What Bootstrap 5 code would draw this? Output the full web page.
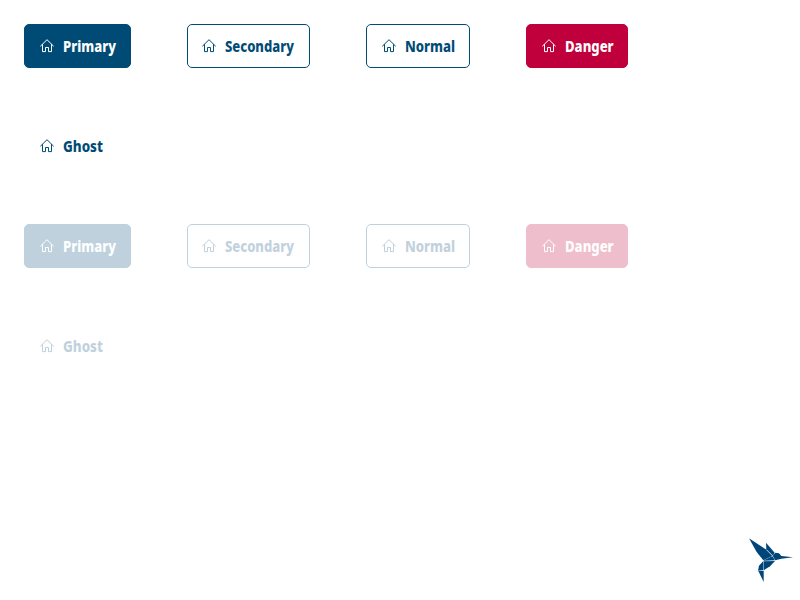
<!DOCTYPE html>
<html lang="en">
<head>
<meta charset="utf-8">
<meta name="viewport" content="width=device-width, initial-scale=1">
<title>Buttons</title>
<link href="https://cdn.jsdelivr.net/npm/bootstrap@5.3.0/dist/css/bootstrap.min.css" rel="stylesheet">
<style>
body { font-family: "Noto Sans", "Open Sans", sans-serif; }
.demo-page { padding: 24px; }
.demo-row { gap: 56px; height: 100px; }
.action-btn {
  --bs-btn-font-weight: 800;
  --bs-btn-border-radius: 5px;
  --bs-btn-disabled-opacity: .25;
  --bs-btn-padding-x: 15px;
  --bs-btn-padding-y: 0;
  --bs-btn-line-height: 24px;
  height: 44px;
  gap: 9px;
}
.action-btn svg { width: 14px; height: 14px; flex: none; }
.caption { display: block; white-space: nowrap; font-size: 15px; transform-origin: 0 50%; transform: scaleX(.875); }
.tone-blue {
  --bs-btn-color: #fff; --bs-btn-bg: #004b76; --bs-btn-border-color: #004b76;
  --bs-btn-hover-color: #fff; --bs-btn-hover-bg: #003a5c;
  --bs-btn-disabled-color: #fff; --bs-btn-disabled-bg: #004b76; --bs-btn-disabled-border-color: #004b76;
}
.tone-line {
  --bs-btn-color: #004b76; --bs-btn-bg: #fff; --bs-btn-border-color: #004b76;
  --bs-btn-hover-color: #fff; --bs-btn-hover-bg: #004b76;
  --bs-btn-disabled-color: #004b76; --bs-btn-disabled-bg: #fff; --bs-btn-disabled-border-color: #004b76;
}
.tone-red {
  --bs-btn-color: #fff; --bs-btn-bg: #c0003c; --bs-btn-border-color: #c0003c;
  --bs-btn-hover-color: #fff; --bs-btn-hover-bg: #98002f;
  --bs-btn-disabled-color: #fff; --bs-btn-disabled-bg: #c0003c; --bs-btn-disabled-border-color: #c0003c;
}
.tone-ghost { --bs-btn-color: #004b76; --bs-btn-hover-color: #003a5c; --bs-btn-disabled-color: #004b76; --bs-btn-disabled-border-color: transparent; }
.size-primary { width: 107px; }
.size-secondary { width: 123px; --bs-btn-padding-x: 14.4px; }
.size-secondary .caption { transform: scaleX(.87); }
.size-normal { width: 104px; }
.size-danger { width: 102px; }
.size-ghost { width: 95px; }
.size-ghost .caption { transform: scaleX(.895); }
.bird { width: 60px; height: 60px; margin-bottom: 10px; }
</style>
</head>
<body class="bg-white">
<svg class="d-none" aria-hidden="true">
  <symbol id="home" viewBox="0 0 14 14">
    <path d="M.6 7 7 .7 13.4 7M2.5 5.6v7h3V8.5h3v4.1h3v-7" fill="none" stroke="currentColor" stroke-width="1" stroke-linejoin="round" stroke-linecap="round"/>
  </symbol>
</svg>
<main class="demo-page">
  <div class="demo-row d-flex align-items-start">
    <button type="button" class="btn action-btn tone-blue size-primary d-inline-flex align-items-center"><svg><use href="#home"/></svg><span class="caption">Primary</span></button>
    <button type="button" class="btn action-btn tone-line size-secondary d-inline-flex align-items-center"><svg><use href="#home"/></svg><span class="caption">Secondary</span></button>
    <button type="button" class="btn action-btn tone-line size-normal d-inline-flex align-items-center"><svg><use href="#home"/></svg><span class="caption">Normal</span></button>
    <button type="button" class="btn action-btn tone-red size-danger d-inline-flex align-items-center"><svg><use href="#home"/></svg><span class="caption">Danger</span></button>
  </div>
  <div class="demo-row d-flex align-items-start">
    <button type="button" class="btn action-btn tone-ghost size-ghost d-inline-flex align-items-center"><svg><use href="#home"/></svg><span class="caption">Ghost</span></button>
  </div>
  <div class="demo-row d-flex align-items-start">
    <button type="button" disabled class="btn action-btn tone-blue size-primary d-inline-flex align-items-center"><svg><use href="#home"/></svg><span class="caption">Primary</span></button>
    <button type="button" disabled class="btn action-btn tone-line size-secondary d-inline-flex align-items-center"><svg><use href="#home"/></svg><span class="caption">Secondary</span></button>
    <button type="button" disabled class="btn action-btn tone-line size-normal d-inline-flex align-items-center"><svg><use href="#home"/></svg><span class="caption">Normal</span></button>
    <button type="button" disabled class="btn action-btn tone-red size-danger d-inline-flex align-items-center"><svg><use href="#home"/></svg><span class="caption">Danger</span></button>
  </div>
  <div class="demo-row d-flex align-items-start">
    <button type="button" disabled class="btn action-btn tone-ghost size-ghost d-inline-flex align-items-center"><svg><use href="#home"/></svg><span class="caption">Ghost</span></button>
  </div>
</main>
<svg class="bird position-fixed bottom-0 end-0" viewBox="0 0 180 180" role="img" aria-label="Hummingbird">
  <g fill="#00457a">
    <path d="M27 25 77 58 97 78 70 91 50 66Z"/>
    <path d="M78 38 104 68 99 77 79 58Z"/>
    <path d="M98 78 106 68 117 70 124 78 159 82 124 86 106 91Z"/>
    <path d="M71 91 97 79 105 91 72 92Z"/>
    <path d="M71 94 105 93 90 109 71 121Z"/>
    <path d="M70 93 70 120 54 122 57 107Z"/>
    <path d="M55 123 71 122 71 156Z"/>
  </g>
</svg>
<script src="https://cdn.jsdelivr.net/npm/bootstrap@5.3.0/dist/js/bootstrap.bundle.min.js"></script>
</body>
</html>
